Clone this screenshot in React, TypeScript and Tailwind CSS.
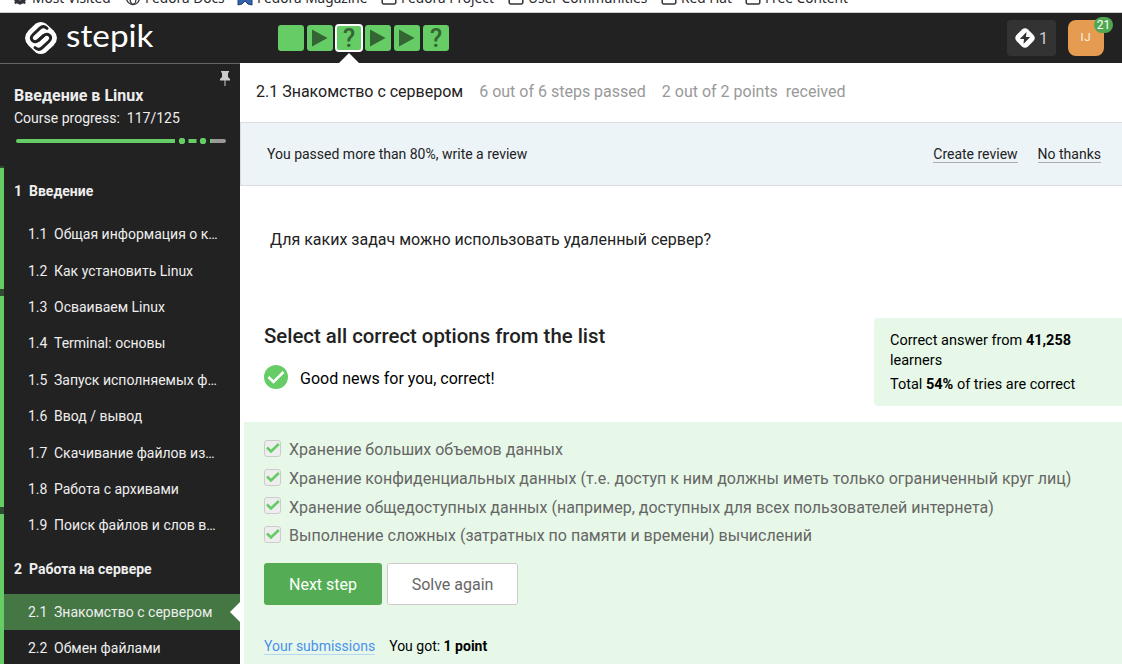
import React from "react";

const font = "font-[Roboto,'Liberation_Sans',sans-serif]";

function FolderIcon() {
  return (
    <svg width="16" height="16" viewBox="0 0 16 16" fill="none" stroke="#33333a" strokeWidth="1.5">
      <path d="M1.2 3.5a1.5 1.5 0 0 1 1.5-1.5h3l2 2h5.600a1.500 1.500 0 0 1 1.500 1.500v7a1.500 1.500 0 0 1-1.500 1.500H2.700a1.500 1.500 0 0 1-1.500-1.500z" />
    </svg>
  );
}

function GearIcon() {
  return (
    <svg width="16" height="16" viewBox="0 0 16 16" fill="none" stroke="#33333a">
      <circle cx="8" cy="8" r="4.200" strokeWidth="4" />
      <path d="M8 1v3M8 12v2.500M1 8h3M12 8h3M3 3l2 2M11 11l2 2.500M13 3l-2 2M5 11l-2 2.500" strokeWidth="2.200" />
    </svg>
  );
}

function GlobeIcon() {
  return (
    <svg width="16" height="16" viewBox="0 0 16 16" fill="none" stroke="#33333a" strokeWidth="1.300">
      <circle cx="8" cy="8" r="6.500" />
      <ellipse cx="8" cy="8" rx="3" ry="6.500" />
      <path d="M1.500 8h13" />
    </svg>
  );
}

function RibbonIcon() {
  return (
    <svg width="16" height="16" viewBox="0 0 16 16">
      <path d="M1 0h14v15l-4-1-3-3-3 3-4 1z" fill="#3465b0" stroke="#1f3d70" />
    </svg>
  );
}

const bookmarks = [
  { label: "Most Visited", icon: <GearIcon />, cls: "w-[113px]" },
  { label: "Fedora Docs", icon: <GlobeIcon />, cls: "w-[112px]" },
  { label: "Fedora Magazine", icon: <RibbonIcon />, cls: "w-[144px]" },
  { label: "Fedora Project", icon: <FolderIcon />, cls: "w-[127px]" },
  { label: "User Communities", icon: <FolderIcon />, cls: "w-[153px]" },
  { label: "Red Hat", icon: <FolderIcon />, cls: "w-[84px]" },
  { label: "Free Content", icon: <FolderIcon />, cls: "w-[120px]" },
];

function BookmarksBar() {
  return (
    <div className="flex h-[13px] shrink-0 flex-col justify-end overflow-hidden border-b border-[#cfcfd2] bg-white">
      <div className="flex h-[22px] shrink-0 items-center pl-3 font-['Noto_Sans','Open_Sans',sans-serif] text-[13.700px] leading-5 text-[#2a2a2e]">
        {bookmarks.map((b) => (
          <div key={b.label} className={`flex h-5 shrink-0 items-start gap-1 whitespace-nowrap ${b.cls}`}>
            <span className="-mt-px shrink-0">{b.icon}</span>
            <span className="-mt-[3px]">{b.label}</span>
          </div>
        ))}
      </div>
    </div>
  );
}

function StepikLogo() {
  return (
    <svg width="131" height="40" viewBox="0 0 131 40" className="block">
      <path
        d="M11.800 5.600Q16.800 2.200 21.800 5.600L29.500 12.600Q36.500 20 29.500 27.400L21.800 34.400Q16.800 37.800 11.800 34.400L4.500 27.400Q-2.500 20 4.500 12.600Z"
        fill="#fff"
      />
      <g fill="none" stroke="#222" strokeWidth="3" strokeLinecap="round" strokeLinejoin="round" transform="translate(0.500 1)">
        <path d="M22.500 9.300C20 7.200 17.600 7.200 15.500 9.200L8.700 15.500C6.200 18 6.300 20.300 8.200 21.800C10.200 23.200 12 23 14 21.200L19 16.500" />
        <path d="M10.500 28.700C13 30.800 15.400 30.800 17.500 28.800L24.300 22.500C26.800 20 26.700 17.700 24.800 16.200C22.800 14.800 21 15 19 16.800L14 21.500" />
      </g>
      <text
        x="42"
        y="28.500"
        fill="#fff"
        fontFamily="Lato, sans-serif"
        fontSize="31.500"
        textLength="87.500"
        lengthAdjust="spacingAndGlyphs"
      >
        stepik
      </text>
    </svg>
  );
}

function StepTile({ kind, active }: { kind: string; active?: boolean }) {
  return (
    <div className="relative">
      <div
        className={`flex size-[26px] items-center justify-center rounded-[3px] bg-[#66cc66] ${active ? "outline-2 -outline-offset-1 outline-white" : ""}`}
      >
        {kind === "video" && (
          <svg width="26" height="26" viewBox="0 0 26 26">
            <path d="M5 4.500L20.500 13L5 21.500Z" fill="#336633" />
          </svg>
        )}
        {kind === "quiz" && <span className="pt-[2px] text-[25px] leading-[26px] font-medium text-[#336633]">?</span>}
      </div>
      {active && (
        <svg className="absolute top-[28px] left-[3px]" width="20" height="10" viewBox="0 0 20 10">
          <path d="M0 10L10 0L20 10Z" fill="#fff" />
        </svg>
      )}
    </div>
  );
}

function Header() {
  return (
    <header className="flex h-[50px] shrink-0 items-center bg-[#222]">
      <div className="w-[278px] shrink-0 pl-6">
        <StepikLogo />
      </div>
      <div className="flex gap-[3px]">
        <StepTile kind="text" />
        <StepTile kind="video" />
        <StepTile kind="quiz" active />
        <StepTile kind="video" />
        <StepTile kind="video" />
        <StepTile kind="quiz" />
      </div>
      <div className="mr-[18px] ml-auto flex items-center gap-3">
        <div className="flex h-9 w-[49px] items-center gap-1 rounded bg-[#333] pl-2 text-base text-[#ccc]">
          <svg width="20" height="20" viewBox="0 0 20 20">
            <path d="M7 1.500Q10-1 13 1.500L18.500 7Q21 10 18.500 13L13 18.500Q10 21 7 18.500L1.500 13Q-1 10 1.500 7Z" fill="#fff" />
            <path d="M11.500 4L4.800 11H9L8.500 16L15.200 9H11Z" fill="#333" />
          </svg>
          <span className="pt-px">1</span>
        </div>
        <div className="relative flex size-9 items-center justify-center rounded-lg bg-[#e59c51] pt-px text-[11px] tracking-[1px] text-white/90">
          IJ
          <span className="absolute -top-[3px] -right-[9px] flex h-4 w-[19px] items-center justify-center rounded-full bg-[#4fa850] text-xs tracking-normal text-white">
            21
          </span>
        </div>
      </div>
    </header>
  );
}

const lessons = [
  ["1.1", "Общая информация о к…"],
  ["1.2", "Как установить Linux"],
  ["1.3", "Осваиваем Linux"],
  ["1.4", "Terminal: основы"],
  ["1.5", "Запуск исполняемых ф…"],
  ["1.6", "Ввод / вывод"],
  ["1.7", "Скачивание файлов из…"],
  ["1.8", "Работа с архивами"],
  ["1.9", "Поиск файлов и слов в…"],
];

function Lesson({ num, title, active }: { num: string; title: string; active?: boolean }) {
  return (
    <div
      className={`relative flex h-[36.4px] shrink-0 items-center pl-6 whitespace-nowrap ${active ? "bg-[#447744]" : ""}`}
    >
      <span className="w-[26px] shrink-0">{num}</span>
      <span>{title}</span>
      {active && (
        <svg className="absolute top-2 right-0" width="10" height="20" viewBox="0 0 10 20">
          <path d="M10 0L0 10L10 20Z" fill="#fff" />
        </svg>
      )}
    </div>
  );
}

function Sidebar() {
  return (
    <aside className="flex w-60 shrink-0 flex-col overflow-hidden border-t border-[#666] bg-[#222] text-sm text-[#eee]">
      <div className="flex h-[102px] shrink-0 flex-col pt-[21px] pr-[14px] pl-[14px]">
        <div className="relative text-base leading-[22px] font-bold">
          Введение в Linux
          <svg className="absolute -top-[14px] -right-1" width="10" height="16" viewBox="0 0 10 16" fill="#ccc">
            <path d="M1 0h8v1.500H8V6l2 2v1.500H0V8l2-2V1.500H1zM4.500 9.500h1V15h-1z" />
          </svg>
        </div>
        <div className="leading-[22px] whitespace-pre">Course progress:  117/125</div>
        <svg className="mt-[9px] ml-[2px]" width="210" height="6" viewBox="0 0 210 6">
          <path d="M2 3H159M172.500 3h8M194 3h2" stroke="#66cc66" strokeWidth="4" />
          <path d="M196 3h12" stroke="#999" strokeWidth="4" />
          <circle cx="2" cy="3" r="2" fill="#66cc66" />
          <circle cx="208" cy="3" r="2" fill="#999" />
          <circle cx="166" cy="3" r="3.200" fill="#66cc66" />
          <circle cx="187" cy="3" r="3.200" fill="#66cc66" />
        </svg>
      </div>
      <div className="flex">
        <div className="flex w-1 shrink-0 flex-col gap-[7px] bg-[#2f4a30] pt-[2px]">
          <div className="h-[121px] bg-[#66cc66]" />
          <div className="h-[211px] bg-[#66cc66]" />
          <div className="h-[153px] bg-[#66cc66]" />
        </div>
        <div className="flex grow flex-col">
          <div className="flex h-[50px] shrink-0 items-center pl-[10px] font-bold">
            <span className="w-[15px]">1</span>Введение
          </div>
          {lessons.map(([n, t]) => (
            <Lesson key={n} num={n} title={t} />
          ))}
          <div className="flex h-[50.400px] shrink-0 items-center pl-[10px] font-bold">
            <span className="w-[15px]">2</span>Работа на сервере
          </div>
          <Lesson num="2.1" title="Знакомство с сервером" active />
          <Lesson num="2.2" title="Обмен файлами" />
        </div>
      </div>
    </aside>
  );
}

const options = [
  { text: "Хранение больших объемов данных", h: "h-[29px]", box: "mt-[2px]" },
  {
    text: "Хранение конфиденциальных данных (т.е. доступ к ним должны иметь только ограниченный круг лиц)",
    h: "h-[29px]",
    box: "mt-[2px]",
  },
  {
    text: "Хранение общедоступных данных (например, доступных для всех пользователей интернета)",
    h: "h-[28px]",
    box: "mt-px",
  },
  { text: "Выполнение сложных (затратных по памяти и времени) вычислений", h: "h-[29px]", box: "mt-[2px]" },
];

function Option({ text, h, box }: { text: string; h: string; box: string }) {
  return (
    <label className={`flex items-start gap-2 text-base leading-[22px] whitespace-nowrap text-[#666] ${h}`}>
      <span
        className={`flex size-[17px] shrink-0 items-center justify-center rounded-[3px] border border-[#ccc] bg-[#eee] ${box}`}
      >
        <svg width="15" height="15" viewBox="0 0 15 15" fill="none" stroke="#66cc66" strokeWidth="2.600">
          <path d="M2 6.500l4 4L13.800 3" />
        </svg>
      </span>
      <span className="pt-px">{text}</span>
    </label>
  );
}

function Main() {
  return (
    <main className="flex min-w-0 grow flex-col bg-white text-[#222]">
      <div className="flex h-[59px] shrink-0 items-center gap-4 pb-[2px] pl-4 text-base whitespace-pre text-[#999]">
        <span className="text-[#222]">2.1 Знакомство с сервером</span>
        <span>6 out of 6 steps passed</span>
        <span>2 out of 2 points  received</span>
      </div>
      <div className="flex h-16 shrink-0 items-center border border-r-0 border-[#dcdce0] bg-[#edf4f8] pr-[21px] pl-[26px] text-sm">
        <span className="pb-px">You passed more than 80%, write a review</span>
        <a className="ml-auto border-b border-[#aaaeb2] pt-px leading-4">Create review</a>
        <a className="ml-5 border-b border-[#aaaeb2] pt-px leading-4">No thanks</a>
      </div>
      <p className="mt-[42px] ml-[30px] text-base leading-6">Для каких задач можно использовать удаленный сервер?</p>
      <div className="mt-[66px] flex h-[104px] shrink-0 justify-between pl-6">
        <div>
          <h2 className="pt-1 text-[20.350px] leading-7 font-medium">Select all correct options from the list</h2>
          <div className="mt-[14px] flex items-start gap-3 text-base text-black">
            <svg className="mt-px" width="24" height="24" viewBox="0 0 24 24">
              <circle cx="12" cy="12" r="12" fill="#66cc66" />
              <path d="M4.500 12l5 5L19.500 7" fill="none" stroke="#fff" strokeWidth="2.500" />
            </svg>
            <span className="pt-[3px] leading-6">Good news for you, correct!</span>
          </div>
        </div>
        <div className="h-[88px] w-[248px] rounded-l bg-[#e7f8e8] pt-[13px] pr-8 pl-4 text-[14.500px] leading-5 text-black">
          <p>
            Correct answer from <b>41,258</b> learners
          </p>
          <p className="mt-1">
            Total <b>54%</b> of tries are correct
          </p>
        </div>
      </div>
      <div className="ml-1 flex grow flex-col bg-[#e7f8e8] pt-4 pl-5">
        {options.map((o) => (
          <Option key={o.text} text={o.text} h={o.h} box={o.box} />
        ))}
        <div className="mt-[10px] flex gap-[5px] text-base">
          <button className="h-[42px] w-[118px] rounded-[3px] bg-[#54ad54] pt-[2px] text-white">Next step</button>
          <button className="h-[42px] w-[131px] rounded-[3px] border border-[#ccc] bg-white pt-px text-[#666]">
            Solve again
          </button>
        </div>
        <div className="mt-[33px] flex items-start gap-[14px] text-sm leading-[16px] text-black">
          <a className="border-b border-[#b5d6f5] leading-4 text-[#4a90f0]">Your submissions</a>
          <span>
            You got: <b>1 point</b>
          </span>
        </div>
      </div>
    </main>
  );
}

export default function App() {
  return (
    <div className={`flex h-[664px] w-[1122px] flex-col overflow-hidden bg-white ${font}`}>
      <BookmarksBar />
      <Header />
      <div className="flex min-h-0 grow">
        <Sidebar />
        <Main />
      </div>
    </div>
  );
}
